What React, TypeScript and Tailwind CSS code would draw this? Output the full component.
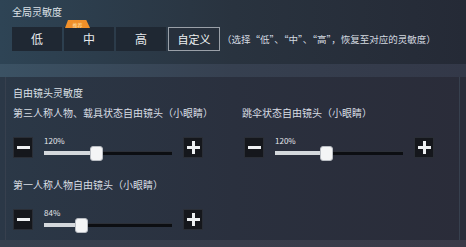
import React from "react";

const font = { fontFamily: '"Noto Sans CJK SC", "Noto Sans", sans-serif' };

function Btn({ minus }: { minus?: boolean }) {
  return (
    <div className="w-[20px] h-[21px] bg-[#15171c] flex items-center justify-center shrink-0 border border-[#2a2e36]">
      <div className="relative w-[13px] h-[13px]">
        <div className="absolute left-0 top-[5px] w-[13px] h-[3px] bg-[#eef0f2]" />
        {!minus && <div className="absolute top-0 left-[5px] w-[3px] h-[13px] bg-[#eef0f2]" />}
      </div>
    </div>
  );
}

function Slider({ value, pct }: { value: string; pct: number }) {
  return (
    <div className="flex items-start">
      <div className="mt-[1px]">
        <Btn minus />
      </div>
      <div className="ml-[11px] w-[128px] flex flex-col">
        <div className="text-[8px] leading-[10px] text-[#e3e6ea] h-[10px]">{value}</div>
        <div className="relative h-[15px]">
          <div className="absolute left-0 right-0 top-[5px] h-[4px] bg-[#0c0e12] border-t border-[#2c3038]" />
          <div className="absolute left-0 top-[5px] h-[4px] bg-[#d4d8dc]" style={{ width: pct }} />
          <div
            className="absolute top-0 w-[13px] h-[15px] rounded-[3px] bg-[#f4f5f6] border border-[#b8bcc2]"
            style={{ left: pct - 6 }}
          />
        </div>
      </div>
      <div className="ml-[11px] mt-[1px]">
        <Btn />
      </div>
    </div>
  );
}

export default function App() {
  return (
    <div className="w-[466px] h-[247px] overflow-hidden text-[#d9dee4]" style={font}>
      {/* Top panel */}
      <div className="h-[64px] bg-gradient-to-r from-[#2e4455] via-[#29333f] to-[#252a36] pl-[12px] pt-[6px]">
        <div className="text-[10px] leading-[12px] text-[#dde2e8]">全局灵敏度</div>
        <div className="flex items-center mt-[9px]">
          <div className="w-[50px] h-[24px] bg-[#1f2833] flex items-center justify-center text-[12px] text-[#e6e9ec]">低</div>
          <div className="relative w-[50px] h-[24px] ml-[2px] bg-[#1f2833] flex items-center justify-center text-[12px] text-[#e6e9ec]">
            中
            <div className="absolute left-[1px] top-[-7px] w-[25px] h-[8px] bg-[#f0902a] [clip-path:polygon(12%_0,85%_0,100%_100%,0_100%)] flex items-center justify-center text-[5px] leading-[5px] text-[#ffe2a8]">推荐</div>
          </div>
          <div className="w-[50px] h-[24px] ml-[2px] bg-[#1f2833] flex items-center justify-center text-[12px] text-[#e6e9ec]">高</div>
          <div className="w-[52px] h-[24px] ml-[2px] bg-[#27303c] border border-[#9aa0a8] flex items-center justify-center text-[11px] text-[#eef0f2]">自定义</div>
          <div className="ml-[2px] text-[9.5px] text-[#d5dae0] whitespace-nowrap">（选择“低”、“中”、“高”，恢复至对应的灵敏度）</div>
        </div>
      </div>
      {/* strip */}
      <div className="h-[13px] bg-gradient-to-r from-[#3b5264] via-[#364050] to-[#333848]" />
      {/* Second panel */}
      <div className="h-[163px] bg-gradient-to-r from-[#2b3847] via-[#2a303e] to-[#2a2c39] pl-[5px] pr-[6px]">
        <div className="h-full border-l border-r border-[#37404e] pl-[7px] pt-[9px]">
          <div className="text-[10px] leading-[14px] text-[#dde2e8]">自由镜头灵敏度</div>
          <div className="flex mt-[6px]">
            <div className="w-[229px]">
              <div className="text-[10px] leading-[14px]">第三人称人物、载具状态自由镜头（小眼睛）</div>
              <div className="mt-[16px]">
                <Slider value="120%" pct={52} />
              </div>
            </div>
            <div>
              <div className="text-[10px] leading-[14px]">跳伞状态自由镜头（小眼睛）</div>
              <div className="mt-[16px] ml-[2px]">
                <Slider value="120%" pct={51} />
              </div>
            </div>
          </div>
          <div className="text-[10px] leading-[14px] mt-[17px]">第一人称人物自由镜头（小眼睛）</div>
          <div className="mt-[16px]">
            <Slider value="84%" pct={37} />
          </div>
        </div>
      </div>
      <div className="h-[7px] bg-gradient-to-r from-[#36404e] to-[#3a3a48]" />
    </div>
  );
}
